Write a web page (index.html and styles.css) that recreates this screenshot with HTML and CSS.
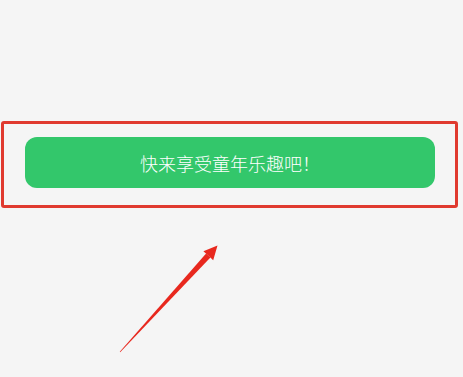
FILE: index.html
```html
<!DOCTYPE html>
<html lang="zh">
<head>
<meta charset="utf-8">
<link rel="stylesheet" href="styles.css">
</head>
<body>
<div class="page">
  <div class="highlight">
    <div class="btn">快来享受童年乐趣吧！</div>
  </div>
  <svg class="arrow" width="463" height="377" viewBox="0 0 463 377">
    <polygon class="shaft" points="119.8,351.8 120.2,352.2 210.4,257.6 206.1,253.6"/>
    <polygon class="head" points="217.5,245.5 213.2,260.2 208.7,256 203.4,251.2"/>
  </svg>
</div>
</body>
</html>
```
FILE: styles.css
```css
html, body {
  margin: 0;
  padding: 0;
  background: #f5f5f5;
}
.page {
  position: relative;
  width: 463px;
  height: 377px;
  overflow: hidden;
  padding-top: 121px;
  box-sizing: border-box;
}
.highlight {
  box-sizing: border-box;
  margin-left: 1px;
  width: 457px;
  height: 87px;
  border: 3px solid #e03a2f;
  border-radius: 3px;
  padding: 13px 20px 0 21px;
}
.btn {
  height: 51px;
  border-radius: 12px;
  background: #33c76b;
  color: #ffffff;
  font-family: "Noto Sans CJK SC", "Noto Sans", sans-serif;
  font-weight: 300;
  font-size: 18px;
  display: flex;
  align-items: center;
  justify-content: center;
}
.arrow {
  position: absolute;
  left: 0;
  top: 0;
}
.shaft, .head {
  fill: #e8281e;
}
```
